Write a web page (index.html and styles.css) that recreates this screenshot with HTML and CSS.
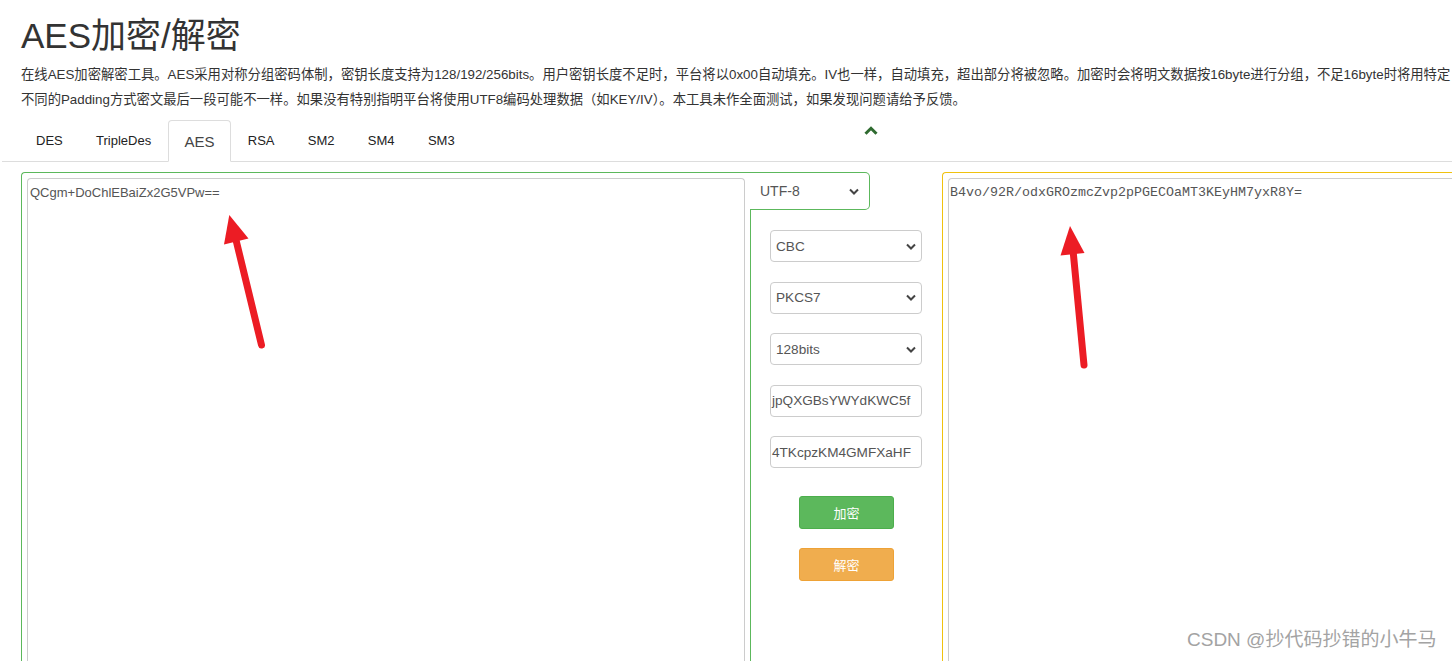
FILE: index.html
```html
<!DOCTYPE html>
<html lang="zh-CN">
<head>
<meta charset="utf-8">
<title>AES加密/解密</title>
<link rel="stylesheet" href="styles.css">
</head>
<body>
<div class="page">
  <h1 class="title">AES加密/解密</h1>
  <p class="desc">在线AES加密解密工具。AES采用对称分组密码体制，密钥长度支持为128/192/256bits。用户密钥长度不足时，平台将以0x00自动填充。IV也一样，自动填充，超出部分将被忽略。加密时会将明文数据按16byte进行分组，不足16byte时将用特定<br>不同的Padding方式密文最后一段可能不一样。如果没有特别指明平台将使用UTF8编码处理数据（如KEY/IV）。本工具未作全面测试，如果发现问题请给予反馈。</p>
  <div class="tabbar">
    <ul class="tabs">
      <li class="tab">DES</li>
      <li class="tab">TripleDes</li>
      <li class="tab active">AES</li>
      <li class="tab">RSA</li>
      <li class="tab">SM2</li>
      <li class="tab">SM4</li>
      <li class="tab">SM3</li>
    </ul>
    <svg class="collapse-toggle" width="14" height="9" viewBox="0 0 14 9"><path d="M1.5 7.8 L7 2.3 L12.5 7.8" stroke="#2f6b30" stroke-width="3" fill="none"/></svg>
  </div>
  <div class="work">
    <div class="panel panel-in">
      <textarea class="textbox">QCgm+DoChlEBaiZx2G5VPw==</textarea>
    </div>
    <div class="mid">
      <div class="charset"><span>UTF-8</span><svg width="10" height="7" viewBox="0 0 10 7"><path d="M1 1.5 L5 5.5 L9 1.5" stroke="#444" stroke-width="2" fill="none"/></svg></div>
      <div class="controls">
        <div class="field select"><span>CBC</span><svg width="10" height="7" viewBox="0 0 10 7"><path d="M1 1.5 L5 5.5 L9 1.5" stroke="#444" stroke-width="2" fill="none"/></svg></div>
        <div class="field select"><span>PKCS7</span><svg width="10" height="7" viewBox="0 0 10 7"><path d="M1 1.5 L5 5.5 L9 1.5" stroke="#444" stroke-width="2" fill="none"/></svg></div>
        <div class="field select"><span>128bits</span><svg width="10" height="7" viewBox="0 0 10 7"><path d="M1 1.5 L5 5.5 L9 1.5" stroke="#444" stroke-width="2" fill="none"/></svg></div>
        <div class="field text">jpQXGBsYWYdKWC5f</div>
        <div class="field text last">4TKcpzKM4GMFXaHF</div>
        <button class="btn btn-enc">加密</button>
        <button class="btn btn-dec">解密</button>
      </div>
    </div>
    <div class="panel panel-out">
      <textarea class="textbox mono">B4vo/92R/odxGROzmcZvp2pPGECOaMT3KEyHM7yxR8Y=</textarea>
    </div>
  </div>
</div>
<svg class="annotations" width="1452" height="661" viewBox="0 0 1452 661">
  <line x1="261.5" y1="345" x2="236" y2="240" stroke="#ec1c24" stroke-width="7" stroke-linecap="round"/>
  <polygon points="229.3,215 224,244.5 248.5,238.5" fill="#ec1c24"/>
  <line x1="1084" y1="365" x2="1073" y2="250" stroke="#ec1c24" stroke-width="7" stroke-linecap="round"/>
  <polygon points="1070,226 1060.5,255.5 1084.5,253" fill="#ec1c24"/>
</svg>
<div class="watermark">CSDN @抄代码抄错的小牛马</div>
</body>
</html>
```
FILE: styles.css
```css
html, body {
  margin: 0;
  padding: 0;
  overflow: hidden;
  background: #fff;
}
body {
  width: 1452px;
  height: 661px;
  position: relative;
  font-family: "Liberation Sans", "Noto Sans CJK SC", sans-serif;
  color: #333;
}
.page {
  padding-top: 17px;
}
.title {
  margin: 0 0 0 21px;
  font-size: 35px;
  line-height: 37px;
  font-weight: normal;
  color: #333;
}
.desc {
  margin: 8px 0 0 21px;
  font-size: 13.33px;
  line-height: 25px;
  white-space: nowrap;
  overflow: hidden;
  color: #333;
}
.tabbar {
  position: relative;
  margin: 8px 0 0 2px;
  border-bottom: 1px solid #ddd;
}
.tabs {
  list-style: none;
  margin: 0;
  padding: 0 0 0 18px;
  display: flex;
}
.tab {
  padding: 10px 15px;
  border: 1px solid transparent;
  border-radius: 4px 4px 0 0;
  margin-right: 1.3px;
  margin-bottom: -1px;
  font-size: 13px;
  line-height: 20px;
  color: #222;
}
.tab.active {
  border-color: #ddd;
  border-bottom-color: #fff;
  background: #fff;
  color: #444;
  font-size: 15px;
  line-height: 21px;
  padding-bottom: 9px;
}
.collapse-toggle {
  position: absolute;
  left: 862px;
  top: 6px;
}
.work {
  display: flex;
  align-items: flex-start;
  margin: 10px 0 0 21px;
}
.panel {
  flex: none;
  box-sizing: border-box;
  height: 489px;
  padding: 5px 5px 0;
  border-top-left-radius: 4px;
}
.panel-in {
  width: 729px;
  border-top: 1px solid #5cb85c;
  border-left: 1px solid #5cb85c;
}
.panel-out {
  width: 510px;
  padding-right: 0;
  border-top: 1px solid #f0c20f;
  border-left: 1px solid #f0c20f;
}
.textbox {
  display: block;
  width: 100%;
  height: 100%;
  box-sizing: border-box;
  margin: 0;
  border: 1px solid #ccc;
  border-bottom: none;
  border-radius: 4px 4px 0 0;
  padding: 5px 2px;
  font-family: "Liberation Sans", sans-serif;
  font-size: 13px;
  line-height: 18px;
  color: #555;
  background: #fff;
  resize: none;
  outline: none;
  overflow: hidden;
}
.textbox.mono {
  font-family: "Liberation Mono", monospace;
  font-size: 13.33px;
  padding-left: 1px;
  border-right: none;
  border-radius: 4px 0 0 0;
  color: #555;
}
.mid {
  flex: none;
  width: 192px;
  height: 489px;
  display: flex;
  flex-direction: column;
}
.charset {
  width: 120px;
  height: 38px;
  box-sizing: border-box;
  border: 1px solid #5cb85c;
  border-left: none;
  border-radius: 0 5px 5px 0;
  padding: 0 10px 0 10px;
  display: flex;
  align-items: center;
  justify-content: space-between;
  font-size: 14px;
  color: #555;
}
.controls {
  flex: 1;
  border-left: 1px solid #5cb85c;
  padding: 20px 0 0 19px;
  display: flex;
  flex-direction: column;
  align-items: flex-start;
}
.field {
  width: 152px;
  height: 32px;
  box-sizing: border-box;
  border: 1px solid #ccc;
  border-radius: 4px;
  margin-bottom: 19.5px;
  display: flex;
  align-items: center;
  font-size: 13.6px;
  color: #555;
  overflow: hidden;
  white-space: nowrap;
}
.field.select {
  justify-content: space-between;
  padding: 0 5px 0 5px;
}
.field.text {
  padding: 0 1px;
}
.field.last {
  margin-bottom: 28px;
}
.btn {
  width: 95px;
  height: 33px;
  margin: 0 0 19px 29px;
  padding: 0;
  border-radius: 3px;
  border: 1px solid;
  font-family: "Liberation Sans", "Noto Sans CJK SC", sans-serif;
  font-size: 13px;
  color: #fff;
}
.btn-enc {
  background: #5cb85c;
  border-color: #4cae4c;
}
.btn-dec {
  background: #f0ad4e;
  border-color: #eea236;
}
.annotations {
  position: absolute;
  left: 0;
  top: 0;
  pointer-events: none;
}
.watermark {
  position: absolute;
  left: 1187px;
  top: 628px;
  font-size: 19px;
  line-height: 24px;
  color: #a3a3a3;
  white-space: nowrap;
  text-shadow: 0 0 1px #fff;
}
```
